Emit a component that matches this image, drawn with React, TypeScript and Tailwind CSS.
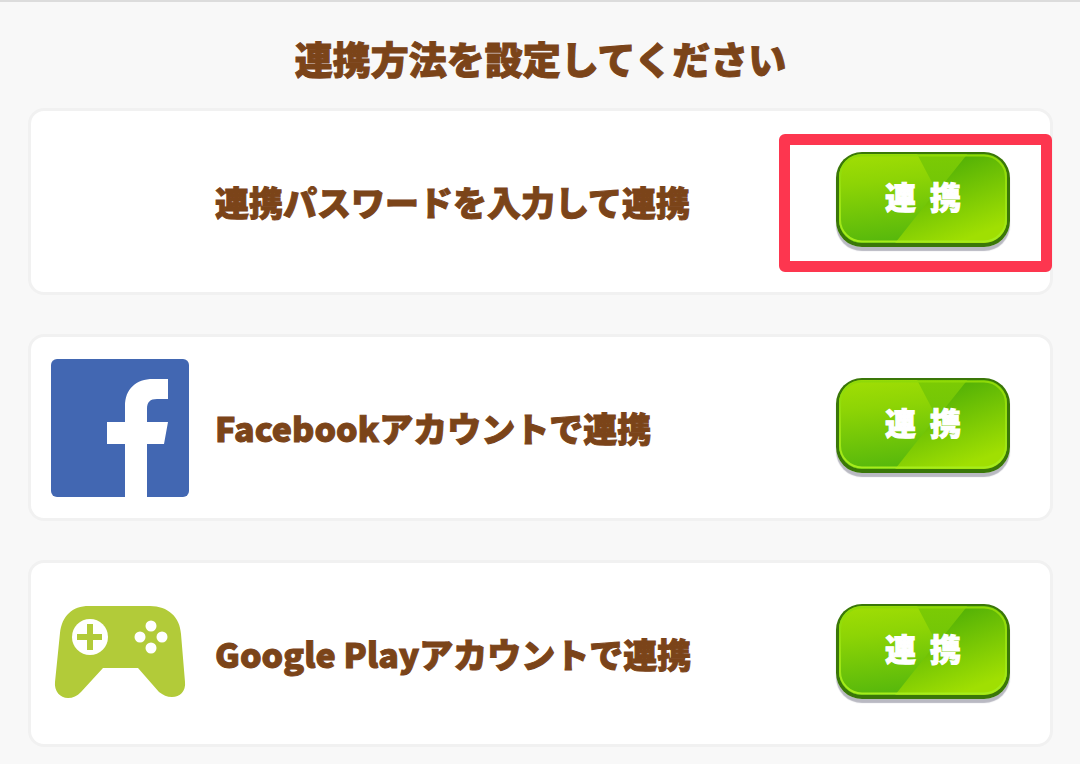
import { useId } from "react";

type LinkMethod = {
  id: string;
  label: string;
  icon?: React.ReactNode;
  highlighted?: boolean;
};

const FacebookIcon = () => (
  <svg viewBox="0 0 138 138" className="w-full" aria-hidden="true">
    <rect width="138" height="138" rx="6" fill="#4267b2" />
    <path
      fill="#fff"
      d="M74 138V85H56V63H74V47C74 30 85 20 102 20H117V40H106C99 40 96 43 96 50V63H117L113 85H96V138Z"
    />
  </svg>
);

const GamepadIcon = () => (
  <svg viewBox="0 16 138 138" className="w-full" aria-hidden="true">
    <path
      fill="#b2cb39"
      d="M38 37H99C117 37 129 48 130 65L134 113C135 122 129 128 121 128C116 128 112 126 108 123L87 99H52L30 123C26 127 22 129 17 129C9 129 3 122 4 113L9 64C11 47 21 37 38 37Z"
    />
    <circle cx="39" cy="68" r="18" fill="#fff" />
    <path fill="#b2cb39" d="M36 55H42V65H51V71H42V81H36V71H26V65H36Z" />
    <g fill="#fff">
      <circle cx="100" cy="57" r="5.5" />
      <circle cx="89" cy="68" r="5.5" />
      <circle cx="111" cy="68" r="5.5" />
      <circle cx="100" cy="79" r="5.5" />
    </g>
  </svg>
);

// Glossy green face behind the button text
const ButtonFace = () => {
  const id = useId();

  return (
    <svg
      viewBox="0 0 174 95"
      className="absolute inset-0 h-full w-full"
      aria-hidden="true"
    >
      <defs>
        <linearGradient id={`${id}-left`} x1="0" y1="0" x2="0.15" y2="1">
          <stop offset="0" stopColor="#a3df04" />
          <stop offset="0.35" stopColor="#8dd405" />
          <stop offset="1" stopColor="#55b70c" />
        </linearGradient>
        <linearGradient
          id={`${id}-right`}
          gradientUnits="userSpaceOnUse"
          x1="110"
          y1="12"
          x2="138"
          y2="84"
        >
          <stop offset="0" stopColor="#55b206" />
          <stop offset="1" stopColor="#a0df02" />
        </linearGradient>
        <linearGradient id={`${id}-top`} x1="0" y1="0" x2="0" y2="1">
          <stop offset="0" stopColor="#7ccb04" />
          <stop offset="1" stopColor="#72c507" />
        </linearGradient>
        <linearGradient id={`${id}-rim`} x1="0" y1="0" x2="0" y2="1">
          <stop offset="0" stopColor="#8fd907" />
          <stop offset="1" stopColor="#a6ec1c" />
        </linearGradient>
        <clipPath id={`${id}-clip`}>
          <rect x="3" y="2" width="168" height="89" rx="23" />
        </clipPath>
      </defs>
      <rect width="174" height="95" rx="26" fill="#3a7708" />
      <g clipPath={`url(#${id}-clip)`}>
        <rect width="174" height="95" fill={`url(#${id}-right)`} />
        <path d="M0 0H131L56 95H0Z" fill={`url(#${id}-left)`} />
        <path d="M80 0H133L101 40Z" fill={`url(#${id}-top)`} />
      </g>
      <rect
        x="4"
        y="3.5"
        width="166"
        height="86"
        rx="22"
        fill="none"
        stroke={`url(#${id}-rim)`}
        strokeWidth="2"
      />
    </svg>
  );
};

const methods: LinkMethod[] = [
  {
    id: "password",
    label: "連携パスワードを入力して連携",
    highlighted: true,
  },
  {
    id: "facebook",
    label: "Facebookアカウントで連携",
    icon: <FacebookIcon />,
  },
  {
    id: "google-play",
    label: "Google Playアカウントで連携",
    icon: <GamepadIcon />,
  },
];

const App = () => {
  const handleLink = (id: string) => {
    console.log("link account:", id);
  };

  return (
    <main className="min-h-screen border-t-2 border-[#dcdcdc] bg-[#f8f8f8] pt-[30px] pr-[27px] pb-5 pl-7 font-['Noto_Sans_CJK_JP',sans-serif] font-black text-[#7b4419] [-webkit-text-stroke:1px]">
      <h1 className="text-center text-[38px] leading-[52px]">
        連携方法を設定してください
      </h1>

      <ul className="mt-6 flex flex-col gap-[39px]">
        {methods.map((method) => (
          <li
            key={method.id}
            className="relative flex h-[187px] items-center rounded-2xl border-3 border-[#f1f1f1] bg-white pr-10 pl-5"
          >
            <div className="w-[138px] shrink-0">{method.icon}</div>
            <p
              id={method.id}
              className="ml-[26px] flex-1 text-[34px] leading-[48px]"
            >
              {method.label}
            </p>
            <button
              type="button"
              aria-describedby={method.id}
              onClick={() => handleLink(method.id)}
              className="relative mb-1 h-[95px] w-[174px] shrink-0 cursor-pointer rounded-[26px] pb-2 text-[31px] leading-[48px] text-white shadow-[0_4px_1px_#b9b9c2]"
            >
              <ButtonFace />
              <span className="relative whitespace-pre">連{"  "}携</span>
            </button>
            {method.highlighted && (
              <div className="pointer-events-none absolute top-[23px] -right-0.5 h-[138px] w-[273px] rounded-md border-11 border-[#fd364f]" />
            )}
          </li>
        ))}
      </ul>
    </main>
  );
};

export default App;
